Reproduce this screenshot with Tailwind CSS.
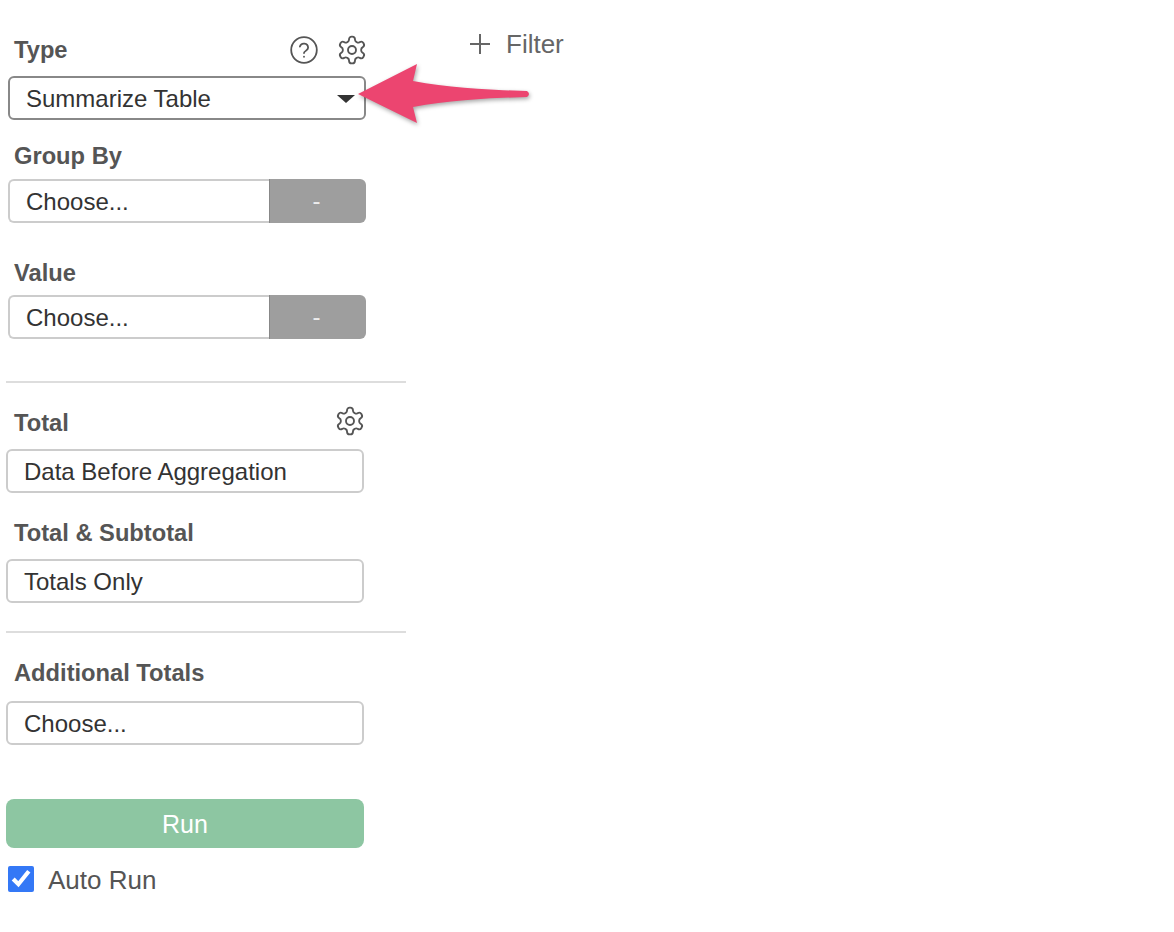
<!DOCTYPE html>
<html lang="en">
<head>
  <meta charset="UTF-8" />
  <title>Summarize Table</title>
  <script src="https://cdn.jsdelivr.net/npm/@tailwindcss/browser@4"></script>
</head>
<body class="bg-white font-['Liberation_Sans',Arial,sans-serif] text-[24px] overflow-hidden">
  <div class="relative flex w-[1174px] h-[932px]">
    <!-- left panel -->
    <aside class="w-[406px] ml-[6px] pt-[36px] shrink-0">
      <div class="flex items-center h-[28px] pl-[8px] pr-[46px] text-[#555] font-bold text-[23.7px]">
        <span class="flex-1 pt-[2px]">Type</span>
        <svg class="w-[30px] h-[30px] mr-[17px]" viewBox="0 0 30 30" fill="none" stroke="#555" stroke-width="1.8" stroke-linecap="round" stroke-linejoin="round"><circle cx="15" cy="15" r="12.8"/><path d="M10.9 11.6a4.2 4.2 0 0 1 8.2 1.2c0 2.8-4.1 3.2-4.1 5.2"/><path d="M15 21.6v.2"/></svg>
        <svg class="w-[32px] h-[32px] -mr-[2px]" viewBox="0 0 24 24" fill="none" stroke="#555" stroke-width="1.4" stroke-linecap="round" stroke-linejoin="round"><path d="M12.22 2h-.44a2 2 0 0 0-2 2v.18a2 2 0 0 1-1 1.73l-.43.25a2 2 0 0 1-2 0l-.15-.08a2 2 0 0 0-2.73.73l-.22.38a2 2 0 0 0 .73 2.73l.15.1a2 2 0 0 1 1 1.72v.51a2 2 0 0 1-1 1.74l-.15.09a2 2 0 0 0-.73 2.73l.22.38a2 2 0 0 0 2.73.73l.15-.08a2 2 0 0 1 2 0l.43.25a2 2 0 0 1 1 1.73V20a2 2 0 0 0 2 2h.44a2 2 0 0 0 2-2v-.18a2 2 0 0 1 1-1.73l.43-.25a2 2 0 0 1 2 0l.15.08a2 2 0 0 0 2.73-.73l.22-.39a2 2 0 0 0-.73-2.73l-.15-.08a2 2 0 0 1-1-1.74v-.5a2 2 0 0 1 1-1.74l.15-.09a2 2 0 0 0 .73-2.73l-.22-.38a2 2 0 0 0-2.73-.73l-.15.08a2 2 0 0 1-2 0l-.43-.25a2 2 0 0 1-1-1.73V4a2 2 0 0 0-2-2z"/><circle cx="12" cy="12" r="3"/></svg>
      </div>
      <div class="flex items-center justify-between mt-[12px] ml-[2px] w-[358px] h-[44px] pl-[16px] pr-[9px] border-2 border-[#888] rounded-[6px] text-[#333]">
        <span class="pt-[2px]">Summarize Table</span>
        <span class="w-0 h-0 mt-[2px] border-x-[9px] border-x-transparent border-t-[8px] border-t-[#333]"></span>
      </div>

      <div class="flex items-center h-[28px] mt-[22px] pt-[2px] pl-[8px] text-[#555] font-bold text-[23.7px]">Group By</div>
      <div class="flex mt-[9px] ml-[2px] w-[358px] h-[44px]">
        <div class="flex items-center flex-1 pl-[16px] pt-[2px] border-2 border-r-0 border-[#ccc] rounded-l-[6px] text-[#333]">Choose...</div>
        <div class="flex items-center justify-center w-[97px] pr-[3px] bg-[#9e9e9e] border-l border-[#888] rounded-r-[6px] text-white/80">-</div>
      </div>

      <div class="flex items-center h-[28px] mt-[36px] pt-[2px] pl-[8px] text-[#555] font-bold text-[23.7px]">Value</div>
      <div class="flex mt-[8px] ml-[2px] w-[358px] h-[44px]">
        <div class="flex items-center flex-1 pl-[16px] pt-[2px] border-2 border-r-0 border-[#ccc] rounded-l-[6px] text-[#333]">Choose...</div>
        <div class="flex items-center justify-center w-[97px] pr-[3px] bg-[#9e9e9e] border-l border-[#888] rounded-r-[6px] text-white/80">-</div>
      </div>

      <div class="mt-[42px] h-[2px] w-[400px] bg-[#ddd]"></div>

      <div class="flex items-center justify-between h-[28px] mt-[26px] pl-[8px] w-[358px] text-[#555] font-bold text-[23.7px]">
        <span class="pt-[2px]">Total</span>
        <svg class="w-[32px] h-[32px] -mr-[2px] -mt-[5px]" viewBox="0 0 24 24" fill="none" stroke="#555" stroke-width="1.4" stroke-linecap="round" stroke-linejoin="round"><path d="M12.22 2h-.44a2 2 0 0 0-2 2v.18a2 2 0 0 1-1 1.73l-.43.25a2 2 0 0 1-2 0l-.15-.08a2 2 0 0 0-2.73.73l-.22.38a2 2 0 0 0 .73 2.73l.15.1a2 2 0 0 1 1 1.72v.51a2 2 0 0 1-1 1.74l-.15.09a2 2 0 0 0-.73 2.73l.22.38a2 2 0 0 0 2.73.73l.15-.08a2 2 0 0 1 2 0l.43.25a2 2 0 0 1 1 1.73V20a2 2 0 0 0 2 2h.44a2 2 0 0 0 2-2v-.18a2 2 0 0 1 1-1.73l.43-.25a2 2 0 0 1 2 0l.15.08a2 2 0 0 0 2.73-.73l.22-.39a2 2 0 0 0-.73-2.73l-.15-.08a2 2 0 0 1-1-1.74v-.5a2 2 0 0 1 1-1.74l.15-.09a2 2 0 0 0 .73-2.73l-.22-.38a2 2 0 0 0-2.73-.73l-.15.08a2 2 0 0 1-2 0l-.43-.25a2 2 0 0 1-1-1.73V4a2 2 0 0 0-2-2z"/><circle cx="12" cy="12" r="3"/></svg>
      </div>
      <div class="flex items-center mt-[12px] w-[358px] h-[44px] pl-[16px] pt-[2px] border-2 border-[#ccc] rounded-[6px] text-[#333]">Data Before Aggregation</div>

      <div class="flex items-center h-[28px] mt-[26px] pt-[2px] pl-[8px] text-[#555] font-bold text-[23.7px]">Total &amp; Subtotal</div>
      <div class="flex items-center mt-[12px] w-[358px] h-[44px] pl-[16px] pt-[2px] border-2 border-[#ccc] rounded-[6px] text-[#333]">Totals Only</div>

      <div class="mt-[28px] h-[2px] w-[400px] bg-[#ddd]"></div>

      <div class="flex items-center h-[28px] mt-[26px] pt-[2px] pl-[8px] text-[#555] font-bold text-[23.7px]">Additional Totals</div>
      <div class="flex items-center mt-[14px] w-[358px] h-[44px] pl-[16px] pt-[2px] border-2 border-[#ccc] rounded-[6px] text-[#333]">Choose...</div>

      <button class="block mt-[54px] pt-[2px] w-[358px] h-[49px] bg-[#8dc6a2] rounded-[8px] text-white text-[25px]">Run</button>
      <label class="flex items-center gap-[14px] mt-[18px] ml-[2px] h-[26px] text-[#555] text-[26px]">
        <input type="checkbox" checked class="w-[26px] h-[26px] m-0 accent-[#3478f6]" />
        <span class="pt-[3px]">Auto Run</span>
      </label>
    </aside>

    <!-- filter -->
    <div class="flex items-center gap-[16px] h-[28px] mt-[30px] ml-[58px] text-[#666] text-[26px]">
      <svg class="w-[20px] h-[20px]" viewBox="0 0 20 20" fill="none" stroke="#666" stroke-width="2"><path d="M10 0v20M0 10h20"/></svg>
      <span>Filter</span>
    </div>

    <!-- annotation arrow -->
    <svg class="absolute left-[350px] top-[56px] drop-shadow-[1px_2px_2px_rgba(0,0,0,0.35)]" width="190" height="76" viewBox="350 56 190 76">
      <path d="M358 94 L417 64 L413 81 C450 88 490 90 527 91 Q531 94 527 97 C490 98 450 100 413 107 L417 123 Z" fill="#ec4570"/>
    </svg>
  </div>
</body>
</html>
